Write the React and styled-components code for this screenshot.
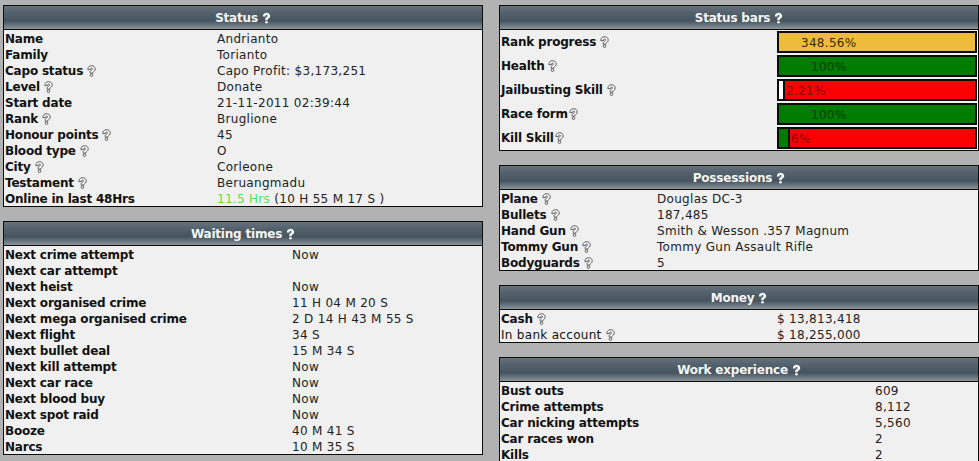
import React from "react";
import styled, { createGlobalStyle } from "styled-components";

const GlobalStyle = createGlobalStyle`
  html, body {
    margin: 0;
    height: 461px;
    overflow: hidden;
    background: #b2b2b2;
  }
  body {
    font-family: "DejaVu Sans", Verdana, sans-serif;
    font-size: 12px;
    color: #111;
  }
`;

const Page = styled.div`
  display: grid;
  grid-template-columns: 480px 480px;
  column-gap: 16px;
  padding: 5px 0 0 3px;
  height: 456px;
  overflow: hidden;
`;

const Column = styled.div`
  display: flex;
  flex-direction: column;
  gap: 14px;
`;

const Panel = styled.section`
  border: 1px solid #0c0c0c;
  background: #f0f0f0;
`;

const Header = styled.div`
  height: 23px;
  border-bottom: 1px solid #0c0c0c;
  display: flex;
  align-items: center;
  justify-content: center;
  gap: 4px;
  color: #f4f6f7;
  font-weight: bold;
  letter-spacing: -0.2px;
  background: linear-gradient(#66727c 0%, #53616c 30%, #47545f 65%, #8a949c 100%);
`;

const Row = styled.div`
  display: grid;
  grid-template-columns: ${({ $label }) => $label}px 1fr;
  height: 15px;
  padding: 1px 0 0 1px;
  line-height: 16px;
  white-space: nowrap;
`;

const BarRow = styled(Row)`
  height: 24px;
  padding-top: 0;
  line-height: 24px;
`;

const Label = styled.span`
  font-weight: ${({ $plain }) => ($plain ? "normal" : "bold")};
  letter-spacing: ${({ $plain }) => ($plain ? "0.3px" : "-0.2px")};
  display: flex;
  align-items: center;
  gap: ${({ $tight }) => ($tight ? 1 : 4)}px;
`;

const Value = styled.span`
  color: #222;
  letter-spacing: 0.3px;
`;

const Green = styled.span`
  color: #55e055;
`;

const Bar = styled.div`
  display: flex;
  position: relative;
  height: 18px;
  margin: 1px 1px 1px 0;
  border: 2px solid #0c0c0c;
  background: ${({ $bg }) => $bg};
`;

const Fill = styled.div`
  background: ${({ $color }) => $color};
  border-right: 2px solid #0c0c0c;
`;

const BarText = styled.span`
  position: absolute;
  top: 0;
  left: ${({ $left }) => $left}px;
  line-height: 20px;
  letter-spacing: 0.3px;
  color: ${({ $color }) => $color};
`;

const hintShape =
  "M0.8 4.6 C0.8 2 2.4 0.7 4.5 0.7 C6.7 0.7 8.2 2 8.2 4 C8.2 5.7 7 6.4 5.8 7.2 V8.2 H3.2 V6.6 C3.2 5.6 5.5 5 5.5 4 C5.5 3.4 5.1 3 4.5 3 C3.9 3 3.5 3.5 3.5 4.6 Z";

const Hint = ({ light }) => (
  <svg width="9" height="12" viewBox="0 0 9 12" fill={light ? "#f4f6f7" : "#f6f6f6"} stroke={light ? "none" : "#555"} strokeWidth="0.9">
    <path d={hintShape} />
    <circle cx="4.5" cy="10.2" r="1.3" />
  </svg>
);

const Card = ({ title, children }) => (
  <Panel>
    <Header>
      {title} <Hint light />
    </Header>
    {children}
  </Panel>
);

const Line = ({ label, hint, plain, col, children }) => (
  <Row $label={col}>
    <Label $plain={plain}>
      {label}
      {hint && <Hint />}
    </Label>
    <Value>{children}</Value>
  </Row>
);

const statusRows = [
  ["Name", false, "Andrianto"],
  ["Family", false, "Torianto"],
  ["Capo status", true, "Capo Profit: $3,173,251"],
  ["Level", true, "Donate"],
  ["Start date", false, "21-11-2011 02:39:44"],
  ["Rank", true, "Bruglione"],
  ["Honour points", true, "45"],
  ["Blood type", true, "O"],
  ["City", true, "Corleone"],
  ["Testament", true, "Beruangmadu"],
];

const waitRows = [
  ["Next crime attempt", "Now"],
  ["Next car attempt", ""],
  ["Next heist", "Now"],
  ["Next organised crime", "11 H 04 M 20 S"],
  ["Next mega organised crime", "2 D 14 H 43 M 55 S"],
  ["Next flight", "34 S"],
  ["Next bullet deal", "15 M 34 S"],
  ["Next kill attempt", "Now"],
  ["Next car race", "Now"],
  ["Next blood buy", "Now"],
  ["Next spot raid", "Now"],
  ["Booze", "40 M 41 S"],
  ["Narcs", "10 M 35 S"],
];

const possessionRows = [
  ["Plane", "Douglas DC-3"],
  ["Bullets", "187,485"],
  ["Hand Gun", "Smith & Wesson .357 Magnum"],
  ["Tommy Gun", "Tommy Gun Assault Rifle"],
  ["Bodyguards", "5"],
];

const workRows = [
  ["Bust outs", "609"],
  ["Crime attempts", "8,112"],
  ["Car nicking attempts", "5,560"],
  ["Car races won", "2"],
  ["Kills", "2"],
];

const bars = [
  { label: "Rank progress", bg: "#eebb3c", text: "348.56%", left: 22, color: "#3b2c05" },
  { label: "Health", bg: "#007d00", text: "100%", left: 32, color: "#024002" },
  { label: "Jailbusting Skill", bg: "#fb0000", fill: "#fff", width: 4, text: "2.21%", left: 7, color: "#8a0505" },
  { label: "Race form", tight: true, bg: "#007d00", text: "100%", left: 32, color: "#024002" },
  { label: "Kill Skill", tight: true, bg: "#fb0000", fill: "#007d00", width: 9, text: "6%", left: 12, color: "#8a0505" },
];

const App = () => (
  <>
    <GlobalStyle />
    <Page>
      <Column>
        <Card title="Status">
          {statusRows.map(([label, hint, value]) => (
            <Line key={label} col={212} label={label} hint={hint}>
              {value}
            </Line>
          ))}
          <Line col={212} label="Online in last 48Hrs">
            <Green>11.5 Hrs</Green> (10 H 55 M 17 S )
          </Line>
        </Card>
        <Card title="Waiting times">
          {waitRows.map(([label, value]) => (
            <Line key={label} col={287} label={label}>
              {value}
            </Line>
          ))}
        </Card>
      </Column>
      <Column>
        <Card title="Status bars">
          {bars.map((bar) => (
            <BarRow key={bar.label} $label={276}>
              <Label $tight={bar.tight}>
                {bar.label}
                <Hint />
              </Label>
              <Bar $bg={bar.bg}>
                {bar.fill && <Fill $color={bar.fill} style={{ width: bar.width }} />}
                <BarText $left={bar.left} $color={bar.color}>
                  {bar.text}
                </BarText>
              </Bar>
            </BarRow>
          ))}
        </Card>
        <Card title="Possessions">
          {possessionRows.map(([label, value]) => (
            <Line key={label} col={156} label={label} hint>
              {value}
            </Line>
          ))}
        </Card>
        <Card title="Money">
          <Line col={276} label="Cash" hint>
            $ 13,813,418
          </Line>
          <Line col={276} label="In bank account" hint plain>
            $ 18,255,000
          </Line>
        </Card>
        <Card title="Work experience">
          {workRows.map(([label, value]) => (
            <Line key={label} col={374} label={label}>
              {value}
            </Line>
          ))}
        </Card>
      </Column>
    </Page>
  </>
);

export default App;
